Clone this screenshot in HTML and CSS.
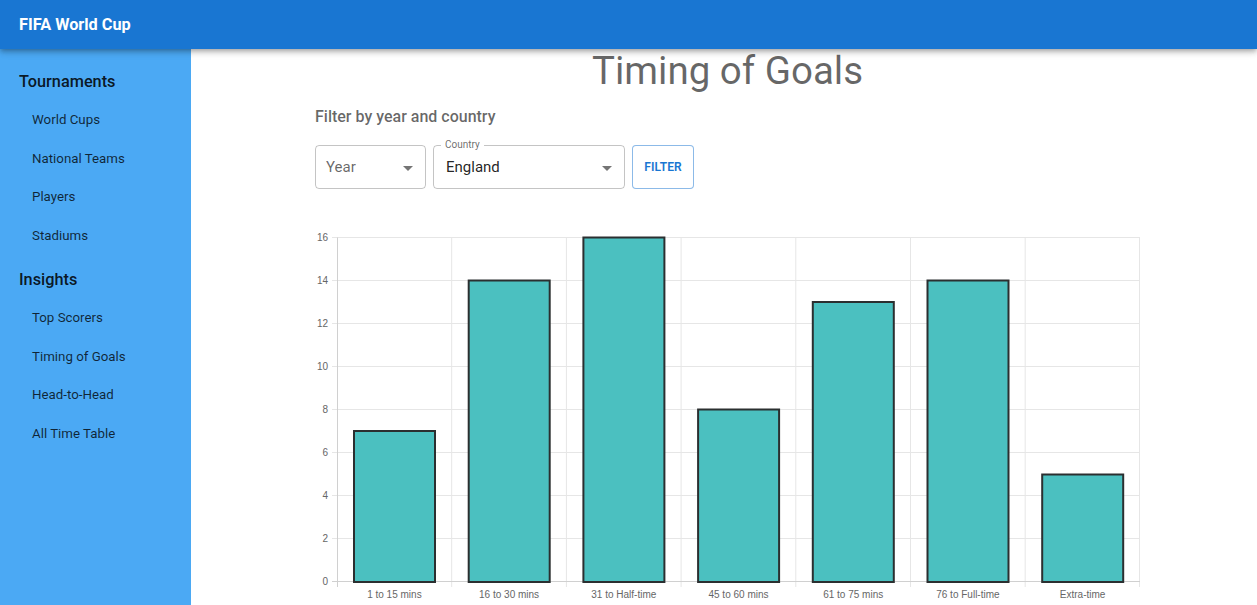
FILE: index.html
```html
<!DOCTYPE html>
<html>
<head>
<meta charset="utf-8">
<link rel="stylesheet" href="styles.css">
</head>
<body>
<header class="appbar"><span class="brand">FIFA World Cup</span></header>
<div class="layout">
  <nav class="sidebar">
    <h2 class="section">Tournaments</h2>
    <a class="item">World Cups</a>
    <a class="item">National Teams</a>
    <a class="item">Players</a>
    <a class="item">Stadiums</a>
    <h2 class="section">Insights</h2>
    <a class="item">Top Scorers</a>
    <a class="item">Timing of Goals</a>
    <a class="item">Head-to-Head</a>
    <a class="item">All Time Table</a>
  </nav>
  <main class="main">
    <div class="content">
      <h1 class="title">Timing of Goals</h1>
      <h3 class="subtitle">Filter by year and country</h3>
      <div class="filters">
        <div class="select select-year">
          <span class="placeholder">Year</span>
          <span class="caret"></span>
        </div>
        <div class="select select-country">
          <span class="legend">Country</span>
          <span class="value">England</span>
          <span class="caret"></span>
        </div>
        <button class="btn">FILTER</button>
      </div>
      <svg class="chart" width="825" height="377" viewBox="0 0 825 377">
        <g class="grid" stroke="#e6e6e6" stroke-width="1">
          <line x1="22" y1="8.5" x2="825" y2="8.5"/>
          <line x1="22" y1="51.5" x2="825" y2="51.5"/>
          <line x1="22" y1="94.5" x2="825" y2="94.5"/>
          <line x1="22" y1="137.5" x2="825" y2="137.5"/>
          <line x1="22" y1="180.5" x2="825" y2="180.5"/>
          <line x1="22" y1="223.5" x2="825" y2="223.5"/>
          <line x1="22" y1="266.5" x2="825" y2="266.5"/>
          <line x1="22" y1="309.5" x2="825" y2="309.5"/>
          <line x1="136.7" y1="8.5" x2="136.7" y2="358"/>
          <line x1="251.4" y1="8.5" x2="251.4" y2="358"/>
          <line x1="366.1" y1="8.5" x2="366.1" y2="358"/>
          <line x1="480.8" y1="8.5" x2="480.8" y2="358"/>
          <line x1="595.5" y1="8.5" x2="595.5" y2="358"/>
          <line x1="710.2" y1="8.5" x2="710.2" y2="358"/>
          <line x1="824.5" y1="8.5" x2="824.5" y2="358"/>
          <line x1="17" y1="8.5" x2="22" y2="8.5"/>
          <line x1="17" y1="51.5" x2="22" y2="51.5"/>
          <line x1="17" y1="94.5" x2="22" y2="94.5"/>
          <line x1="17" y1="137.5" x2="22" y2="137.5"/>
          <line x1="17" y1="180.5" x2="22" y2="180.5"/>
          <line x1="17" y1="223.5" x2="22" y2="223.5"/>
          <line x1="17" y1="266.5" x2="22" y2="266.5"/>
          <line x1="17" y1="309.5" x2="22" y2="309.5"/>
        </g>
        <g stroke="#d0d0d0" stroke-width="1">
          <line x1="22.5" y1="8.5" x2="22.5" y2="358"/>
          <line x1="17" y1="352.5" x2="825" y2="352.5"/>
        </g>
        <g class="bars" fill="#4bc0c0" stroke="#2b2f30" stroke-width="2">
          <rect x="39" y="202" width="81" height="151"/>
          <rect x="153.7" y="51.5" width="81" height="301.5"/>
          <rect x="268.4" y="8.5" width="81" height="344.5"/>
          <rect x="383.1" y="180.5" width="81" height="172.5"/>
          <rect x="497.8" y="73" width="81" height="280"/>
          <rect x="612.5" y="51.5" width="81" height="301.5"/>
          <rect x="727.2" y="245.5" width="81" height="107.5"/>
        </g>
        <g class="ylabels" text-anchor="end">
          <text x="13" y="12">16</text>
          <text x="13" y="55">14</text>
          <text x="13" y="98">12</text>
          <text x="13" y="141">10</text>
          <text x="13" y="184">8</text>
          <text x="13" y="227">6</text>
          <text x="13" y="270">4</text>
          <text x="13" y="313">2</text>
          <text x="13" y="356">0</text>
        </g>
        <g class="xlabels" text-anchor="middle">
          <text x="79.4" y="368.5">1 to 15 mins</text>
          <text x="194.1" y="368.5">16 to 30 mins</text>
          <text x="308.8" y="368.5">31 to Half-time</text>
          <text x="423.5" y="368.5">45 to 60 mins</text>
          <text x="538.2" y="368.5">61 to 75 mins</text>
          <text x="652.9" y="368.5">76 to Full-time</text>
          <text x="767.6" y="368.5">Extra-time</text>
        </g>
      </svg>
    </div>
  </main>
</div>
</body>
</html>
```
FILE: styles.css
```css
* { box-sizing: border-box; }
html, body { margin: 0; padding: 0; height: 100%; overflow: hidden; }
body { font-family: Roboto, "Liberation Sans", sans-serif; background: #fff; }

.appbar {
  position: relative;
  z-index: 2;
  height: 49px;
  background: #1976d2;
  display: flex;
  align-items: center;
  padding-left: 19px;
  box-shadow: 0 2px 4px -1px rgba(0,0,0,0.2), 0 4px 5px 0 rgba(0,0,0,0.14), 0 1px 10px 0 rgba(0,0,0,0.12);
}
.brand { color: #fff; font-size: 16.3px; font-weight: 700; }

.layout { display: flex; height: calc(100% - 49px); }

.sidebar {
  width: 191px;
  flex: none;
  background: #4ba9f4;
  padding-top: 21px;
  display: flex;
  flex-direction: column;
}
.section {
  margin: 0;
  padding-left: 19px;
  font-size: 16.3px;
  font-weight: 500;
  color: rgba(0,0,0,0.87);
  height: 24px;
  line-height: 24px;
  margin-bottom: 7px;
}
.item {
  display: block;
  padding-left: 32px;
  font-size: 13.3px;
  color: rgba(0,0,0,0.78);
  height: 38.5px;
  line-height: 38.5px;
}
.item + .section { margin-top: 13px; }

.main { flex: 1; padding-left: 124px; }
.content { width: 825px; display: flex; flex-direction: column; }

.title {
  margin: 0;
  text-align: center;
  font-size: 38.5px;
  font-weight: 400;
  color: rgba(0,0,0,0.6);
  line-height: 42px;
  margin-top: 1px;
}
.subtitle {
  margin: 15px 0 0 0;
  font-size: 16px;
  font-weight: 500;
  color: rgba(0,0,0,0.6);
  line-height: 20px;
}
.filters {
  display: flex;
  gap: 7px;
  margin-top: 18px;
  height: 44px;
}
.select {
  position: relative;
  border: 1px solid rgba(0,0,0,0.23);
  border-radius: 4px;
  display: flex;
  align-items: center;
  font-size: 15px;
}
.select-year { width: 111px; padding-left: 10px; }
.select-country { width: 192px; padding-left: 12px; }
.placeholder { color: rgba(0,0,0,0.6); }
.value { color: rgba(0,0,0,0.87); }
.caret {
  position: absolute;
  right: 12px;
  top: 20px;
  width: 0; height: 0;
  border-left: 5px solid transparent;
  border-right: 5px solid transparent;
  border-top: 5px solid rgba(0,0,0,0.54);
}
.legend {
  position: absolute;
  left: 7px;
  top: -7px;
  padding: 0 4px;
  background: #fff;
  font-size: 10px;
  line-height: 12px;
  color: rgba(0,0,0,0.6);
}
.btn {
  width: 62px;
  border: 1px solid rgba(25,118,210,0.5);
  border-radius: 4px;
  background: #fff;
  color: #1976d2;
  font-family: Roboto, "Liberation Sans", sans-serif;
  font-size: 12px;
  font-weight: 600;
  letter-spacing: 0.1px;
  padding: 0;
}

.chart { display: block; margin-top: 40px; }
.chart text { font-family: "Liberation Sans", Arial, sans-serif; font-size: 10px; fill: #666; }
```
